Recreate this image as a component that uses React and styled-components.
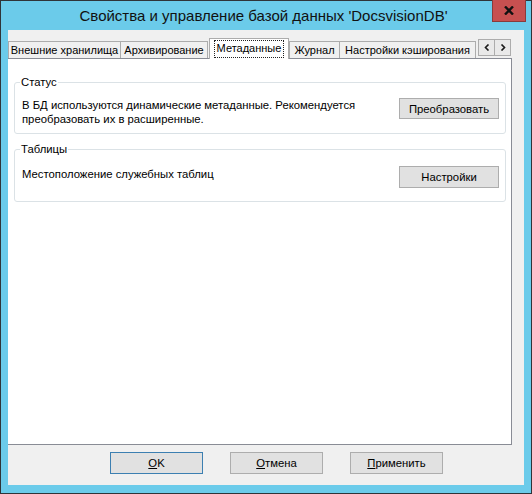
import React from "react";
import styled, { createGlobalStyle } from "styled-components";

const Global = createGlobalStyle`
  html, body { margin: 0; padding: 0; background: #ffffff; }
  body { font-family: "Liberation Sans", Arial, sans-serif; }
  * { box-sizing: border-box; }
`;

const Window = styled.div`
  width: 532px;
  height: 494px;
  border: 1px solid #2f3438;
  background: #6bcbea;
  display: flex;
  flex-direction: column;
  padding: 0 7px 8px 7px;
`;

const TitleBar = styled.div`
  height: 29px;
  margin: 0 -7px;
  display: flex;
  align-items: flex-start;
`;

const Title = styled.div`
  flex: 1;
  height: 29px;
  padding-left: 34px;
  font-size: 15px;
  line-height: 29px;
  text-align: center;
  color: #111;
  white-space: nowrap;
`;

const CloseButton = styled.div`
  width: 34px;
  height: 22px;
  margin: -1px 5px 0 0;
  background: #c75050;
  border: 1px solid #8a3b3b;
  border-top: none;
  display: flex;
  align-items: center;
  justify-content: center;
`;

const Client = styled.div`
  flex: 1;
  background: #f0f0f0;
  display: flex;
  flex-direction: column;
`;

const TabStrip = styled.div`
  height: 28px;
  padding-top: 8px;
  display: flex;
  align-items: flex-end;
`;

const Tab = styled.div`
  position: relative;
  width: ${(p) => p.w}px;
  height: ${(p) => (p.active ? 21 : 17)}px;
  margin-left: ${(p) => p.ml || 0}px;
  margin-bottom: ${(p) => (p.active ? -1 : 0)}px;
  z-index: ${(p) => (p.active ? 1 : 0)};
  background: ${(p) => (p.active ? "#ffffff" : "#f0f0f0")};
  border: 1px solid #acacac;
  border-bottom: none;
  font-size: 11px;
  color: #000;
  display: flex;
  align-items: ${(p) => (p.active ? "flex-start" : "center")};
  justify-content: center;
  white-space: nowrap;
`;

const Focus = styled.span`
  margin-top: 1px;
  padding: 1px 2px 2px;
  border: 1px dotted #222;
  line-height: 13px;
`;

const Scroller = styled.div`
  align-self: flex-start;
  margin: 1px 0 0 2px;
  display: flex;
`;

const ScrollButton = styled.div`
  width: 17px;
  height: 17px;
  margin-left: ${(p) => (p.second ? -1 : 0)}px;
  background: #e9e9e9;
  border: 1px solid #acacac;
  display: flex;
  align-items: center;
  justify-content: center;
`;

const Panel = styled.div`
  width: 504px;
  height: 387px;
  background: #ffffff;
  border: 1px solid #898c95;
  border-left: none;
  padding: 17px 5px 0 6px;
  display: flex;
  flex-direction: column;
  gap: 9px;
`;

const Group = styled.fieldset`
  margin: 0;
  padding: ${(p) => p.pad};
  border: 1px solid #dbe2e6;
  border-radius: 3px;
  min-inline-size: 0;
`;

const Legend = styled.legend`
  padding: 0 1px;
  margin-left: -2px;
  font-size: 11.3px;
  line-height: 13px;
  color: #000;
`;

const Row = styled.div`
  display: flex;
  justify-content: space-between;
  align-items: flex-start;
`;

const Text = styled.div`
  font-size: 11.3px;
  line-height: 14px;
  color: #000;
  margin-top: ${(p) => p.mt || 0}px;
`;

const Button = styled.button`
  width: ${(p) => p.w || 100}px;
  height: ${(p) => p.h || 20}px;
  padding: 0;
  background: #e1e1e1;
  border: 1px solid ${(p) => (p.primary ? "#3c7fb1" : "#adadad")};
  font-family: "Liberation Sans", Arial, sans-serif;
  font-size: 11.3px;
  color: #000;
  u { text-decoration: underline; }
`;

const Footer = styled.div`
  margin-top: 7px;
  padding-left: 102px;
  display: flex;
  gap: 27px;
`;

const Chevron = ({ left }) => (
  <svg width="6" height="7" viewBox="0 0 6 7">
    <path
      d={left ? "M4.5 0.5 L1.5 3.5 L4.5 6.5" : "M1.5 0.5 L4.5 3.5 L1.5 6.5"}
      fill="none"
      stroke="#1a1a1a"
      strokeWidth="1.6"
    />
  </svg>
);

const tabs = [
  { id: 1, text: "Внешние хранилища", w: 113 },
  { id: 2, text: "Архивирование", w: 88, ml: -1 },
  { id: 3, text: "Метаданные", w: 80, ml: 1, active: true },
  { id: 4, text: "Журнал", w: 51 },
  { id: 5, text: "Настройки кэширования", w: 137, ml: -1 },
];

export default function App() {
  return (
    <>
      <Global />
      <Window>
        <TitleBar>
          <Title>Свойства и управление базой данных 'DocsvisionDB'</Title>
          <CloseButton>
            <svg width="10" height="9" viewBox="0 0 10 9">
              <path d="M1 0.5 L9 8.5 M9 0.5 L1 8.5" stroke="#111" strokeWidth="2.4" />
            </svg>
          </CloseButton>
        </TitleBar>
        <Client>
          <TabStrip>
            {tabs.map((t) => (
              <Tab key={t.id} w={t.w} ml={t.ml} active={t.active}>
                {t.active ? <Focus>{t.text}</Focus> : t.text}
              </Tab>
            ))}
            <Scroller>
              <ScrollButton>
                <Chevron left />
              </ScrollButton>
              <ScrollButton second>
                <Chevron />
              </ScrollButton>
            </Scroller>
          </TabStrip>
          <Panel>
            <Group pad="9px 6px 7px 7px">
              <Legend>Статус</Legend>
              <Row>
                <Text>
                  В БД используются динамические метаданные. Рекомендуется
                  <br />
                  преобразовать их в расширенные.
                </Text>
                <Button w={100} h={21}>Преобразовать</Button>
              </Row>
            </Group>
            <Group pad="10px 6px 13px 7px">
              <Legend>Таблицы</Legend>
              <Row>
                <Text mt={1}>Местоположение служебных таблиц</Text>
                <Button w={100} h={22}>Настройки</Button>
              </Row>
            </Group>
          </Panel>
          <Footer>
            <Button w={93} h={22} primary>
              <u>O</u>K
            </Button>
            <Button w={93} h={22}>
              <u>О</u>тмена
            </Button>
            <Button w={93} h={22}>
              <u>П</u>рименить
            </Button>
          </Footer>
        </Client>
      </Window>
    </>
  );
}
